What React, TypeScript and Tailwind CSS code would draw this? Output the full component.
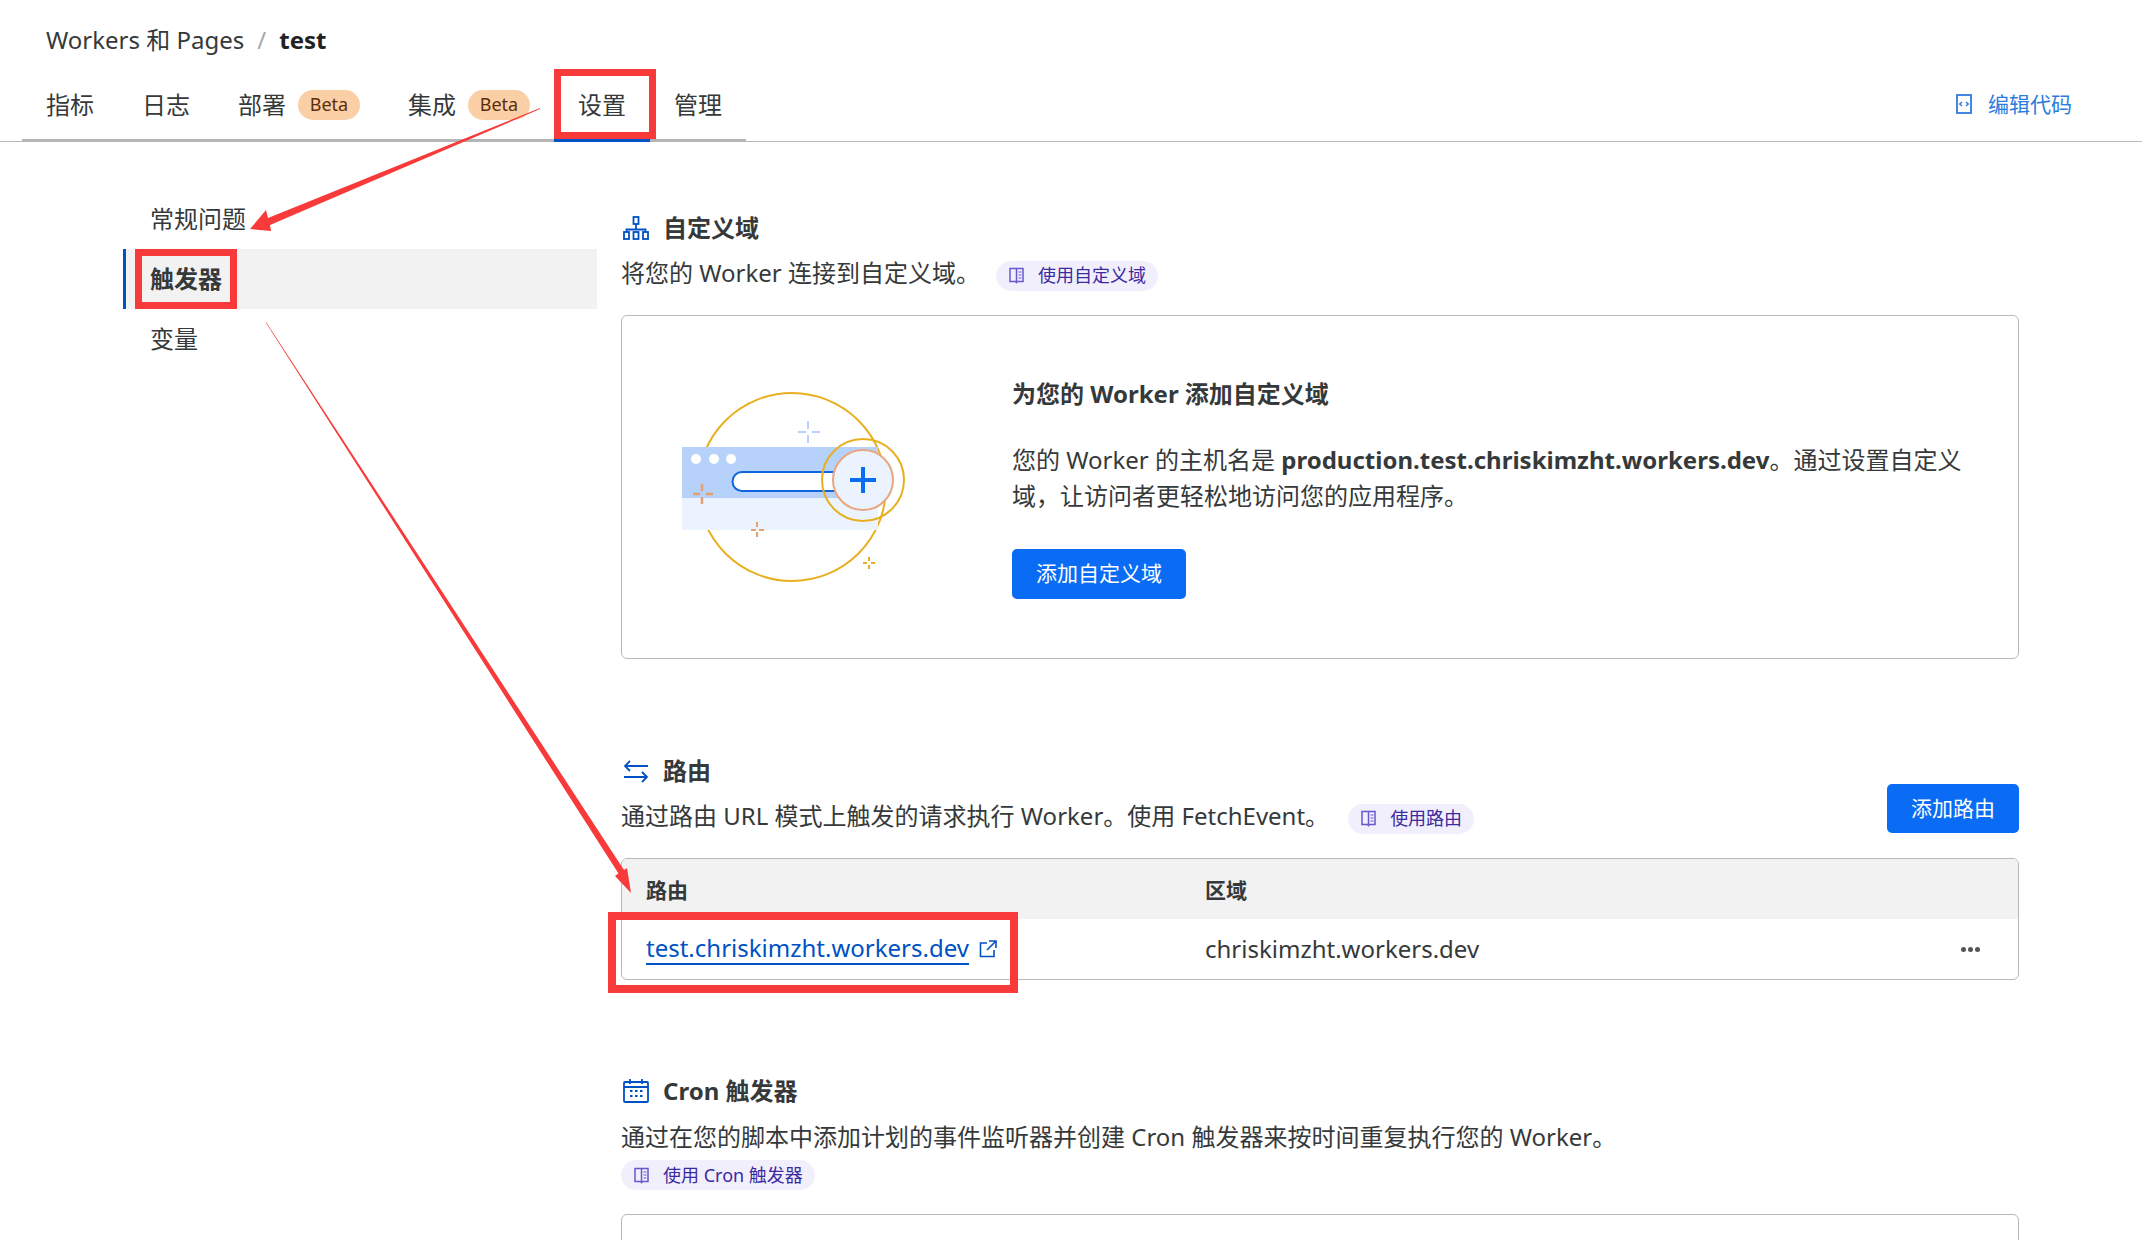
import type { ReactNode } from 'react'

const BookIcon = () => (
  <svg width="17" height="17" viewBox="0 0 17 17" fill="none" stroke="#6558cf" strokeWidth="1.5">
    <path d="M2 1.500h13v13H9.500l-1 1.200-1-1.200H2z" />
    <path d="M8.500 1.500v13" />
    <path d="M10.500 5h3M10.500 8h3M10.500 11h3" strokeWidth="1.2" />
  </svg>
)

const NetworkIcon = () => (
  <svg width="26" height="24" viewBox="0 0 26 24" fill="none" stroke="#0051c3" strokeWidth="1.8">
    <rect x="10.5" y="1" width="5" height="7" />
    <path d="M13 8v6M3.500 16v-2.500h19V16" />
    <rect x="1" y="16" width="5" height="7" />
    <rect x="10.500" y="16" width="5" height="7" />
    <rect x="20" y="16" width="5" height="7" />
  </svg>
)

const SwapIcon = () => (
  <svg width="26" height="23" viewBox="0 0 26 23" fill="none" stroke="#0051c3" strokeWidth="1.8">
    <path d="M25 6H2M7 1 2 6l5 5" />
    <path d="M1 17h23M19 12l5 5-5 5" />
  </svg>
)

const CalendarIcon = () => (
  <svg width="26" height="24" viewBox="0 0 26 24" fill="none" stroke="#0051c3" strokeWidth="1.8">
    <rect x="1" y="3" width="24" height="20" rx="1" />
    <path d="M1 8h24M7 0v5M19 0v5" />
    <path d="M7 12h2.500M12 12h2.500M17 12h2.500M7 17h2.500M12 17h2.500M17 17h2.500" strokeWidth="2" />
  </svg>
)

const Chip = ({ children }: { children: ReactNode }) => (
  <span className="inline-flex h-[30px] items-center gap-[13px] rounded-full bg-[#f2effd] pl-[12px] pr-[12px] text-[18px] text-[#3b2aa0]">
    <BookIcon />
    {children}
  </span>
)

const Heading = ({ icon, children }: { icon: ReactNode; children: ReactNode }) => (
  <div className="flex h-[36px] items-center gap-[14px] pl-[2px] text-[24px] font-bold">
    {icon}
    <span>{children}</span>
  </div>
)

const Beta = () => (
  <span className="ml-[12px] flex h-[30px] w-[62px] items-center justify-center rounded-full bg-[#fbcfa6] text-[18px] text-[#5c2d0b]">
    Beta
  </span>
)

const Illustration = () => (
  <svg width="260" height="240" viewBox="0 0 260 240" fill="none">
    <circle cx="132" cy="117" r="94" stroke="#e8b020" strokeWidth="2" />
    <rect x="22" y="77" width="196" height="52" fill="#b6d2fb" />
    <rect x="22" y="128" width="196" height="32" fill="#ebf3fe" />
    <circle cx="36" cy="89" r="5" fill="#fff" />
    <circle cx="54" cy="89" r="5" fill="#fff" />
    <circle cx="71" cy="89" r="5" fill="#fff" />
    <path d="M82 102h138v19H82a9.500 9.500 0 0 1 0-19z" fill="#fff" stroke="#0f66de" strokeWidth="2" />
    <circle cx="203" cy="110" r="41" stroke="#e8b020" strokeWidth="2" />
    <circle cx="203" cy="110" r="30" fill="#ebf3fe" stroke="#e9a67f" strokeWidth="2" />
    <path d="M203 97v26M190 110h26" stroke="#0a6cf0" strokeWidth="4" />
    <path d="M148 51v8M148 65v8M138 62h8M152 62h8" stroke="#b9d2fb" strokeWidth="2" />
    <path d="M42 114v7M42 127v7M33 124h7M46 124h7" stroke="#e6a06f" strokeWidth="2.500" />
    <path d="M97 152v5M97 162v5M91 160h5M99 160h5" stroke="#e6a06f" strokeWidth="2" />
    <path d="M209 187v4M209 195v4M203 193h4M211 193h4" stroke="#e8b020" strokeWidth="2" />
  </svg>
)

// red marks drawn over the screenshot
const Annotations = () => (
  <svg className="absolute left-0 top-0" width="2142" height="1240" fill="none">
    <rect x="557.500" y="72.500" width="95" height="63" stroke="#f93a3a" strokeWidth="7" />
    <rect x="138.500" y="252.500" width="95" height="53" stroke="#f93a3a" strokeWidth="7" />
    <rect x="612" y="916" width="402" height="73" stroke="#f93a3a" strokeWidth="8" />
    <path d="M540 108 268 218 266 210 250 229 271 231 270 225 540 109z" fill="#f93a3a" />
    <path d="M266 322 624 870 627 868 631 893 615 876 618.500 873.500 266 323z" fill="#f93a3a" />
  </svg>
)

export default function App() {
  return (
    <div className="relative h-[1240px] w-[2142px] overflow-hidden bg-white font-['Noto_Sans','Noto_Sans_CJK_SC',sans-serif] text-[24px] text-[#36393a]">
      <div className="flex h-[58px] items-end pl-[46px] leading-[36px]">
        <span>Workers 和 Pages</span>
        <span className="mx-[13px] text-[#a8a8a8]">/</span>
        <span className="font-bold text-[#222]">test</span>
      </div>

      <div className="flex h-[84px] items-end border-b border-[#bbb]">
        <div className="ml-[22px] -mb-px flex h-[83px] w-[724px] items-start border-b-[3px] border-[#b5b5b5]">
          <div className="flex h-[80px] items-center px-[24px] pt-[11px]">指标</div>
          <div className="flex h-[80px] items-center px-[24px] pt-[11px]">日志</div>
          <div className="flex h-[80px] items-center px-[24px] pt-[11px]">部署<Beta /></div>
          <div className="flex h-[80px] items-center px-[24px] pt-[11px]">集成<Beta /></div>
          <div className="flex h-[83px] items-center border-b-[3px] border-[#0051c3] px-[24px] pt-[11px]">设置</div>
          <div className="flex h-[80px] items-center px-[24px] pt-[11px]">管理</div>
        </div>
        <div className="mb-[21px] ml-auto mr-[70px] flex items-center gap-[16px] text-[21px] text-[#2c7cdd]">
          <svg width="16" height="20" viewBox="0 0 16 20" fill="none" stroke="#2c7cdd" strokeWidth="1.800">
            <rect x="1" y="1" width="14" height="18" />
            <path d="M6 8 3.800 10 6 12M10 8l2.200 2-2.200 2" strokeWidth="1.500" />
          </svg>
          编辑代码
        </div>
      </div>

      <div className="flex">
        <div className="ml-[123px] w-[474px] pt-[47px]">
          <div className="flex h-[60px] items-center pl-[27px]">常规问题</div>
          <div className="flex h-[60px] items-center border-l-[3px] border-[#0051c3] bg-[#f2f2f2] pl-[24px] font-bold">触发器</div>
          <div className="flex h-[60px] items-center pl-[27px]">变量</div>
        </div>

        <div className="ml-[24px] w-[1398px] pt-[68px]">
          <Heading icon={<NetworkIcon />}>自定义域</Heading>
          <div className="mt-[9px] flex h-[36px] items-center gap-[16px]">
            <span>将您的 Worker 连接到自定义域。</span>
            <span className="flex pt-[5px]"><Chip>使用自定义域</Chip></span>
          </div>

          <div className="mt-[24px] flex h-[344px] rounded-[6px] border border-[#b8b8b8]">
            <div className="ml-[38px] mt-[54px]">
              <Illustration />
            </div>
            <div className="ml-[92px] pt-[60px]">
              <div className="font-bold leading-[36px]">为您的 Worker 添加自定义域</div>
              <p className="mt-[30px] leading-[36px]">
                您的 Worker 的主机名是 <b>production.test.chriskimzht.workers.dev</b>。通过设置自定义<br />
                域，让访问者更轻松地访问您的应用程序。
              </p>
              <button className="mt-[35px] h-[50px] w-[174px] rounded-[5px] bg-[#0a6cf5] text-[21px] text-white">添加自定义域</button>
            </div>
          </div>

          <div className="mt-[94px] flex items-end justify-between">
            <div>
              <Heading icon={<SwapIcon />}>路由</Heading>
              <div className="mt-[9px] flex h-[36px] items-center gap-[19px]">
                <span>通过路由 URL 模式上触发的请求执行 Worker。使用 FetchEvent。</span>
                <span className="flex pt-[5px]"><Chip>使用路由</Chip></span>
              </div>
            </div>
            <button className="mb-[1px] h-[49px] w-[132px] rounded-[5px] bg-[#0a6cf5] text-[21px] text-white">添加路由</button>
          </div>

          <div className="mt-[24px] h-[122px] overflow-hidden rounded-[6px] border border-[#b8b8b8]">
            <div className="flex h-[60px] items-center bg-[#f2f2f2] pt-[3px] text-[21px] font-bold">
              <div className="w-[583px] pl-[24px]">路由</div>
              <div>区域</div>
            </div>
            <div className="flex h-[60px] items-center">
              <div className="flex w-[583px] items-center gap-[10px] pl-[24px]">
                <span className="border-b-2 border-[#0051c3] leading-[30px] text-[#0051c3]">test.chriskimzht.workers.dev</span>
                <svg width="18" height="18" viewBox="0 0 18 18" fill="none" stroke="#0051c3" strokeWidth="1.600">
                  <path d="M8 3H1.500v13.500H15V10M10 1h7v7M17 1 8 10" />
                </svg>
              </div>
              <div>chriskimzht.workers.dev</div>
              <div className="ml-auto mr-[38px] flex gap-[2px]">
                <span className="h-[5px] w-[5px] rounded-full bg-[#555]" />
                <span className="h-[5px] w-[5px] rounded-full bg-[#555]" />
                <span className="h-[5px] w-[5px] rounded-full bg-[#555]" />
              </div>
            </div>
          </div>

          <div className="mt-[93px]">
            <Heading icon={<CalendarIcon />}>Cron 触发器</Heading>
          </div>
          <div className="mt-[10px] h-[36px] leading-[36px]">通过在您的脚本中添加计划的事件监听器并创建 Cron 触发器来按时间重复执行您的 Worker。</div>
          <div className="mt-[5px] flex">
            <Chip>使用 Cron 触发器</Chip>
          </div>
          <div className="mt-[24px] h-[200px] rounded-[6px] border border-[#b8b8b8]" />
        </div>
      </div>

      <Annotations />
    </div>
  )
}
